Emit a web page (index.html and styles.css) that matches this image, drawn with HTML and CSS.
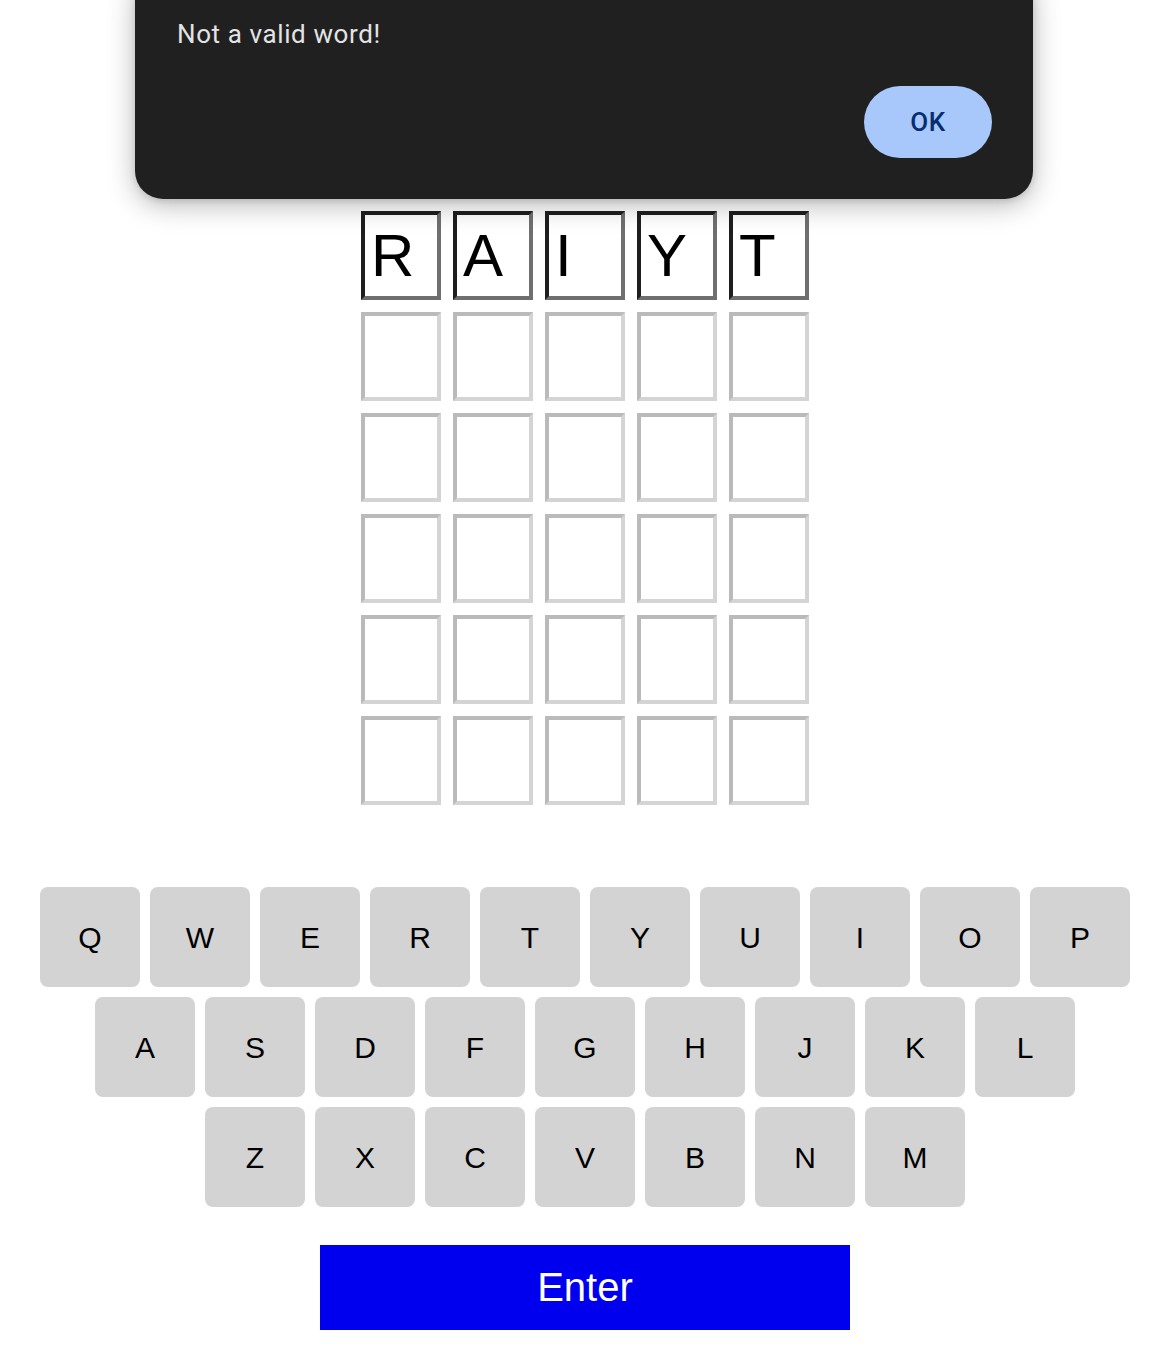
FILE: index.html
```html
<!DOCTYPE html>
<html>
<head>
<meta charset="utf-8">
<link rel="stylesheet" href="styles.css">
</head>
<body>
<main class="game">
  <section class="board">
    <div class="row">
      <div class="tile filled">R</div><div class="tile filled">A</div><div class="tile filled">I</div><div class="tile filled">Y</div><div class="tile filled">T</div>
    </div>
    <div class="row"><div class="tile"></div><div class="tile"></div><div class="tile"></div><div class="tile"></div><div class="tile"></div></div>
    <div class="row"><div class="tile"></div><div class="tile"></div><div class="tile"></div><div class="tile"></div><div class="tile"></div></div>
    <div class="row"><div class="tile"></div><div class="tile"></div><div class="tile"></div><div class="tile"></div><div class="tile"></div></div>
    <div class="row"><div class="tile"></div><div class="tile"></div><div class="tile"></div><div class="tile"></div><div class="tile"></div></div>
    <div class="row"><div class="tile"></div><div class="tile"></div><div class="tile"></div><div class="tile"></div><div class="tile"></div></div>
  </section>
  <section class="keyboard">
    <div class="krow">
      <button class="key">Q</button><button class="key">W</button><button class="key">E</button><button class="key">R</button><button class="key">T</button><button class="key">Y</button><button class="key">U</button><button class="key">I</button><button class="key">O</button><button class="key">P</button>
    </div>
    <div class="krow">
      <button class="key">A</button><button class="key">S</button><button class="key">D</button><button class="key">F</button><button class="key">G</button><button class="key">H</button><button class="key">J</button><button class="key">K</button><button class="key">L</button>
    </div>
    <div class="krow">
      <button class="key">Z</button><button class="key">X</button><button class="key">C</button><button class="key">V</button><button class="key">B</button><button class="key">N</button><button class="key">M</button>
    </div>
  </section>
  <button class="enter">Enter</button>
</main>
<div class="dialog">
  <p class="message">Not a valid word!</p>
  <div class="actions"><button class="ok">OK</button></div>
</div>
</body>
</html>
```

FILE: styles.css
```css
html, body {
  margin: 0;
  padding: 0;
  background: #ffffff;
}
body {
  font-family: "Liberation Sans", Arial, sans-serif;
  width: 1164px;
  min-height: 1362px;
  position: relative;
  overflow: hidden;
}
.game {
  display: flex;
  flex-direction: column;
  align-items: center;
  padding-top: 211px;
  padding-left: 6px;
}
.board {
  display: flex;
  flex-direction: column;
  gap: 12px;
}
.row {
  display: flex;
  gap: 12px;
}
.tile {
  box-sizing: border-box;
  width: 80px;
  height: 89px;
  border: 4px solid;
  border-color: #bababa #d4d4d4 #d4d4d4 #bababa;
  font-size: 60px;
  line-height: 81px;
  padding-left: 6px;
  color: #000;
}
.tile.filled {
  border-color: #1e1e1e #6f6f6f #6f6f6f #1e1e1e;
}
.keyboard {
  margin-top: 82px;
  display: flex;
  flex-direction: column;
  align-items: center;
  gap: 10px;
}
.krow {
  display: flex;
  gap: 10px;
}
.key {
  width: 100px;
  height: 100px;
  border: none;
  border-radius: 8px;
  background: #d3d3d3;
  color: #000;
  font-family: "Liberation Sans", Arial, sans-serif;
  font-size: 30px;
  padding: 0;
  padding-top: 2px;
}
.enter {
  margin-top: 38px;
  width: 530px;
  height: 85px;
  border: none;
  background: #0000ee;
  color: #fff;
  font-family: "Liberation Sans", Arial, sans-serif;
  font-size: 40px;
  padding: 0;
}
.dialog {
  position: absolute;
  left: 135px;
  top: -30px;
  width: 898px;
  height: 229px;
  box-sizing: border-box;
  padding: 48px 41px 41px 42px;
  background: #202020;
  border-radius: 28px;
  box-shadow: 0 6px 28px rgba(0, 0, 0, 0.28), 0 2px 6px rgba(0, 0, 0, 0.12);
  display: flex;
  flex-direction: column;
  font-family: Roboto, "Noto Sans", sans-serif;
}
.message {
  margin: 0;
  font-size: 26px;
  line-height: 32px;
  letter-spacing: 0.6px;
  color: #e3e3e3;
}
.actions {
  margin-top: auto;
  display: flex;
  justify-content: flex-end;
}
.ok {
  width: 128px;
  height: 72px;
  border: none;
  border-radius: 36px;
  background: #a8c7fa;
  color: #062e6f;
  font-family: Roboto, "Noto Sans", sans-serif;
  font-size: 26px;
  font-weight: 500;
  letter-spacing: 0.5px;
  padding: 0;
}
```
